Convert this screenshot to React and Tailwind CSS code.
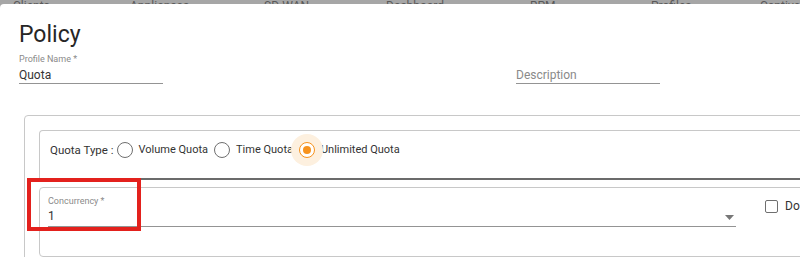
const navItems = [
  { label: "Clients", w: "w-[117px]" },
  { label: "Appliances", w: "w-[134px]" },
  { label: "SD-WAN", w: "w-[122px]" },
  { label: "Dashboard", w: "w-[144px]" },
  { label: "RPM", w: "w-[121px]" },
  { label: "Profiles", w: "w-[109px]" },
  { label: "Captive", w: "w-[60px]" },
];

function Radio({ label, checked }) {
  return (
    <div className="flex items-center">
      <span className="relative flex h-4 w-4 shrink-0 items-center justify-center">
        {checked && (
          <span className="absolute -left-2 -top-2 h-8 w-8 rounded-full bg-[#fdf0df]" />
        )}
        <span
          className={`relative flex h-4 w-4 items-center justify-center rounded-full border-[1.5px] ${
            checked ? "border-[#f7931e]" : "border-[#6f6f6f]"
          } bg-white`}
        >
          {checked && <span className="h-2 w-2 rounded-full bg-[#f7931e]" />}
        </span>
      </span>
      <span className="ml-[6px] text-[11px] leading-4 text-[#333]">{label}</span>
    </div>
  );
}

function App() {
  return (
    <div
      className="relative h-[257px] w-[800px] overflow-hidden bg-[#a6a6a6]"
      style={{ fontFamily: "Roboto, 'Liberation Sans', sans-serif" }}
    >
      {/* page nav behind the dialog */}
      <div className="flex h-[4px] overflow-hidden pl-[13px]">
        {navItems.map((item) => (
          <span
            key={item.label}
            className={`${item.w} -mt-[2px] shrink-0 whitespace-nowrap text-[12px] leading-4 text-[#5a5a5a]`}
          >
            {item.label}
          </span>
        ))}
      </div>

      {/* dialog */}
      <div className="h-full rounded-tl-[4px] bg-white pt-[16px]">
        <div className="pl-[19px]">
          <h1 className="text-[23px] font-normal leading-[29px] text-[#262626]">Policy</h1>

          <div className="mt-[4px] flex gap-[353px]">
            <div className="w-[144px]">
              <div className="text-[9px] leading-3 text-[#8a8a8a]">Profile Name *</div>
              <div className="mt-[2px] border-b border-[#949494] text-[12px] leading-4 text-[#333]">
                Quota
              </div>
            </div>
            <div className="w-[144px]">
              <div className="h-3" />
              <div className="mt-[2px] border-b border-[#949494] text-[12px] leading-4 text-[#8a8a8a]">
                Description
              </div>
            </div>
          </div>
        </div>

        {/* outer section */}
        <div className="ml-[24px] mt-[31px] w-[800px] rounded-[4px] border border-[#c8c8c8] p-[14px]">
          {/* quota type */}
          <div className="h-[50px] rounded-t-[4px] border border-b-2 border-[#c8c8c8] border-b-[#6b6b6b] pt-[3px] pl-[10px]">
            <div className="flex h-8 items-center gap-[6px]">
              <span className="mr-[-3px] text-[11.5px] leading-4 text-[#333]">Quota Type :</span>
              <Radio label="Volume Quota" />
              <Radio label="Time Quota" />
              <Radio label="Unlimited Quota" checked />
            </div>
          </div>

          {/* concurrency */}
          <div className="mt-[7px] h-[70px] rounded-[4px] border border-[#c8c8c8] pl-[8px] pt-[7px]">
            <div className="flex items-start">
              <div className="w-[688px] shrink-0">
                <div className="text-[9px] leading-3 text-[#8a8a8a]">Concurrency *</div>
                <div className="mt-[1px] flex items-center border-b border-[#949494] pb-[2px]">
                  <span className="flex-1 text-[12px] leading-4 text-[#333]">1</span>
                  <svg width="9" height="5" viewBox="0 0 9 5" className="mr-[2px] mt-[2px]">
                    <path d="M0 0 L9 0 L4.5 5 Z" fill="#777" />
                  </svg>
                </div>
              </div>
              <div className="ml-[29px] mt-[3px] flex shrink-0 items-center">
                <span className="h-[13px] w-[13px] rounded-[2px] border-[1.5px] border-[#6f6f6f]" />
                <span className="ml-[7px] whitespace-nowrap text-[12px] leading-4 text-[#333]">
                  Do not restrict
                </span>
              </div>
            </div>
          </div>
        </div>
      </div>

      {/* annotation highlight */}
      <div className="absolute left-[27px] top-[178px] h-[53px] w-[114px] border-4 border-[#e3211d]" />
    </div>
  );
}

export default App;
